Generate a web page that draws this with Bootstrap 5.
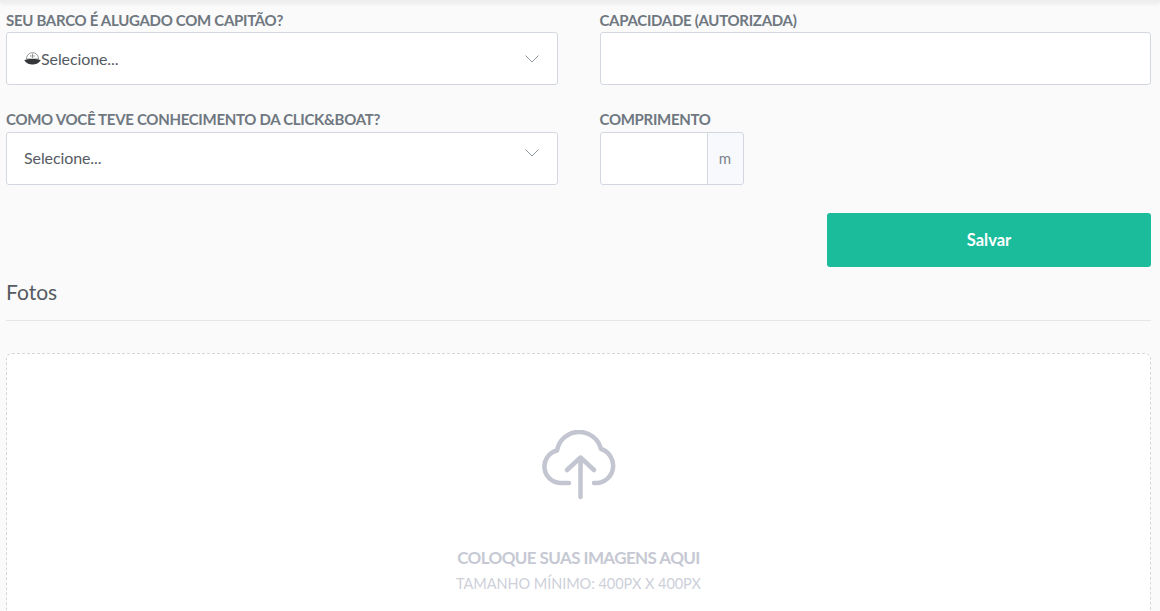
<!DOCTYPE html>
<html lang="pt-BR">

<head>
    <meta charset="UTF-8">
    <meta name="viewport" content="width=device-width, initial-scale=1.0">
    <link href="https://cdn.jsdelivr.net/npm/bootstrap@5.3.0/dist/css/bootstrap.min.css" rel="stylesheet">
    <script src="https://cdn.jsdelivr.net/npm/bootstrap@5.3.0/dist/js/bootstrap.bundle.min.js"></script>
    <style>
        html, body { height: 611px; overflow: hidden; }
        body { background: #fafafa; font-family: Lato, "Open Sans", sans-serif; color: #4a4f57; }
        .top-edge { height: 2px; background: #eeeeee; box-shadow: 0 1px 4px rgba(0, 0, 0, .13); }
        .page-wrap { padding: 10px 9px 0 6px; }
        .form-cols { --bs-gutter-x: 42px; --bs-gutter-y: 0; }
        .field-label { display: block; margin: 0 0 3px; height: 17px; line-height: 17px; font-size: 15px; font-weight: 700; letter-spacing: -.3px; color: #6f7780; white-space: nowrap; }
        .field-block { margin-bottom: 27px; }
        .field-block + .field-block .field-label { line-height: 15px; }
        .field-box { height: 53px; border: 1px solid #d3d8e0; border-radius: 3px; background-color: #fff; box-shadow: none; }
        .pick-box { display: flex; align-items: center; gap: 0; padding: 0 18px 0 17px; font-size: 16px; letter-spacing: -.1px; color: #565b63; background-image: url("data:image/svg+xml,%3csvg xmlns='http://www.w3.org/2000/svg' viewBox='0 0 14 8'%3e%3cpath fill='none' stroke='%238f97a3' stroke-width='1' d='M.5.5 7 7 13.5.5'/%3e%3c/svg%3e"); background-repeat: no-repeat; background-size: 14px 8px; background-position: right 18px center; }
        .pick-high { padding-bottom: 2px; background-position: right 18px top 16px; }
        .size-group { width: 144px; }
        .size-group .field-box { flex: 0 0 108px; width: 108px; }
        .size-unit { flex: 1; justify-content: center; padding: 0; height: 53px; font-size: 15px; color: #7d848e; background: #f8f9fc; border: 1px solid #d3d8e0; border-radius: 0 3px 3px 0; }
        .save-row { margin-top: -15px; }
        .save-btn { width: 324px; height: 54px; border: 0; border-radius: 3px; background: #1abc9c; color: #fff; font-size: 16.5px; font-weight: 700; letter-spacing: 0; }
        .save-btn:hover { background: #1abc9c; color: #fff; }
        .section-title { margin: 12px 0 0; height: 42px; padding-bottom: 0; line-height: 26px; font-size: 21px; font-weight: 400; color: #565b63; border-bottom: 1px solid #e6e6e6; }
        .drop-zone { margin-top: 32px; height: 258px; padding-top: 76px; background: #fff; border: 1px dashed #d5d7dc; border-bottom: 0; border-radius: 6px 6px 0 0; text-align: center; }
        .drop-icon { display: block; margin: 0 auto 0; }
        .drop-title { margin: 48px 0 0; line-height: 20px; font-size: 17px; font-weight: 700; letter-spacing: -.6px; color: #c6c9d4; }
        .drop-hint { margin: 6px 0 0; line-height: 20px; font-size: 14.5px; letter-spacing: -.05px; color: #cdd0d9; }
    </style>
    <title>Click&amp;Boat</title>
</head>

<body>
    <div class="top-edge"></div>
    <div class="page-wrap">
        <div class="row form-cols">
            <div class="col-6">
                <div class="field-block">
                    <label class="field-label">SEU BARCO É ALUGADO COM CAPITÃO?</label>
                    <div class="field-box pick-box">
                        <svg width="17" height="13" viewBox="0 0 17 13">
                            <path d="M2.500 7C2.500 3 5.500 .7 8.500 .7S14.500 3 14.500 7Z" fill="#fff" stroke="#777" stroke-width=".8"/>
                            <path d="M8.500 1.500V6M6 4h5" stroke="#777" stroke-width=".7" fill="none"/>
                            <path d="M.3 8C3 6.500 14 6.500 16.700 8 15 11.800 11 12.500 8.500 12.500S2 11.800.3 8Z" fill="#35363a"/>
                        </svg>
                        <span>Selecione...</span>
                    </div>
                </div>
                <div class="field-block">
                    <label class="field-label">COMO VOCÊ TEVE CONHECIMENTO DA CLICK&amp;BOAT?</label>
                    <div class="field-box pick-box pick-high">
                        <span>Selecione...</span>
                    </div>
                </div>
            </div>
            <div class="col-6">
                <div class="field-block">
                    <label class="field-label">CAPACIDADE (AUTORIZADA)</label>
                    <input type="text" class="form-control field-box">
                </div>
                <div class="field-block">
                    <label class="field-label">COMPRIMENTO</label>
                    <div class="input-group size-group">
                        <input type="text" class="form-control field-box">
                        <span class="input-group-text size-unit">m</span>
                    </div>
                </div>
            </div>
        </div>
        <div class="d-flex justify-content-end save-row pt-3">
            <button type="button" class="btn save-btn">Salvar</button>
        </div>
        <h2 class="section-title">Fotos</h2>
        <div class="drop-zone">
            <svg class="drop-icon" width="74" height="70" viewBox="0 0 74 70" fill="none" stroke="#c3c6d1" stroke-width="4.500" stroke-linecap="round" stroke-linejoin="round">
                <path d="M27 53H18A16.500 16.500 0 0 1 15 20.500 22.500 22.500 0 0 1 59 19 17.500 17.500 0 0 1 56 53H52"/>
                <path d="M38.500 67V27.500M25 40 38.500 27.500 52 40"/>
            </svg>
            <p class="drop-title">COLOQUE SUAS IMAGENS AQUI</p>
            <p class="drop-hint">TAMANHO MÍNIMO: 400PX X 400PX</p>
        </div>
    </div>
</body>

</html>
